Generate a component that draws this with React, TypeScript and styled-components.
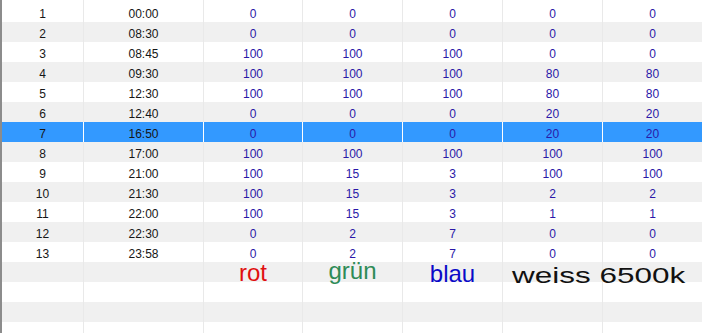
import React from 'react';
import styled, { createGlobalStyle } from 'styled-components';

const GlobalStyle = createGlobalStyle`
  html, body {
    margin: 0;
    padding: 0;
    width: 702px;
    height: 333px;
    overflow: hidden;
    background: #ffffff;
    font-family: 'Liberation Sans', Arial, sans-serif;
  }
`

const COLS = '82px 120px 99px 100px 100px 100px 100px';

const Viewport = styled.div`
  width: 702px;
  height: 333px;
  overflow: hidden;
  border-left: 2px solid #8c8c8c;
  box-sizing: border-box;
  background: #ffffff;
`

const Row = styled.div<{ $bg: string; $sel?: boolean; $h?: number }>`
  display: grid;
  grid-template-columns: ${COLS};
  height: ${({ $h }) => $h ?? 20}px;
  background: ${({ $bg }) => $bg};

  > div {
    border-right: 1px solid ${({ $sel }) => ($sel ? '#ffffff' : '#e9e9e9')};
  }
`

const Cell = styled.div<{ $blue?: boolean }>`
  box-sizing: border-box;
  padding-top: 4px;
  line-height: 16px;
  font-size: 12px;
  text-align: center;
  white-space: nowrap;
  color: ${({ $blue }) => ($blue ? '#2a18a8' : '#161616')};
  overflow: visible;
`

const LabelCell = styled.div<{ $left?: boolean }>`
  position: relative;
  overflow: visible;
  text-align: ${({ $left }) => ($left ? 'left' : 'center')};
  white-space: nowrap;
  z-index: ${({ $left }) => ($left ? 1 : 0)};
`

const Label = styled.span<{ $color: string; $shift: number }>`
  display: inline-block;
  font-size: 24px;
  line-height: 16px;
  color: ${({ $color }) => $color};
  transform: translateY(${({ $shift }) => $shift}px);
`

const WideLabel = styled.span`
  display: inline-block;
  margin-left: 9px;
  font-size: 22px;
  line-height: 16px;
  color: #111111;
  transform-origin: left top;
  transform: translateY(6px) scaleX(1.43);
`

const data: [number, string, number, number, number, number, number][] = [
  [1, '00:00', 0, 0, 0, 0, 0],
  [2, '08:30', 0, 0, 0, 0, 0],
  [3, '08:45', 100, 100, 100, 0, 0],
  [4, '09:30', 100, 100, 100, 80, 80],
  [5, '12:30', 100, 100, 100, 80, 80],
  [6, '12:40', 0, 0, 0, 20, 20],
  [7, '16:50', 0, 0, 0, 20, 20],
  [8, '17:00', 100, 100, 100, 100, 100],
  [9, '21:00', 100, 15, 3, 100, 100],
  [10, '21:30', 100, 15, 3, 2, 2],
  [11, '22:00', 100, 15, 3, 1, 1],
  [12, '22:30', 0, 2, 7, 0, 0],
  [13, '23:58', 0, 2, 7, 0, 0],
]

const SELECTED = 7;

function bandColor(i: number, selected = false) {
  if (selected) return '#3399ff';
  return i % 2 === 0 ? '#f0f0f0' : '#ffffff';
}

function EmptyRow(props: { idx: number }) {
  return <Row $bg={bandColor(props.idx)}>
    {Array.from({ length: 7 }).map((_, c) => <Cell key={c} />)}
  </Row>
}

export default function App() {
  return <>
    <GlobalStyle />
    <Viewport>
      <Row $bg='#ffffff' $h={2}>
        {Array.from({ length: 7 }).map((_, c) => <div key={c} />)}
      </Row>
      {data.map((r) => {
        const sel = r[0] === SELECTED;
        return <Row key={r[0]} $bg={bandColor(r[0], sel)} $sel={sel}>
          <Cell>{r[0]}</Cell>
          <Cell>{r[1]}</Cell>
          <Cell $blue>{r[2]}</Cell>
          <Cell $blue>{r[3]}</Cell>
          <Cell $blue>{r[4]}</Cell>
          <Cell $blue>{r[5]}</Cell>
          <Cell $blue>{r[6]}</Cell>
        </Row>
      })}
      <Row $bg={bandColor(14)}>
        <LabelCell />
        <LabelCell />
        <LabelCell><Label $color='#e01010' $shift={3}>rot</Label></LabelCell>
        <LabelCell><Label $color='#2e8b57' $shift={1}>grün</Label></LabelCell>
        <LabelCell><Label $color='#0a0ac8' $shift={4}>blau</Label></LabelCell>
        <LabelCell $left><WideLabel>weiss 6500k</WideLabel></LabelCell>
        <LabelCell />
      </Row>
      <EmptyRow idx={15} />
      <EmptyRow idx={16} />
      <EmptyRow idx={17} />
    </Viewport>
  </>
}
